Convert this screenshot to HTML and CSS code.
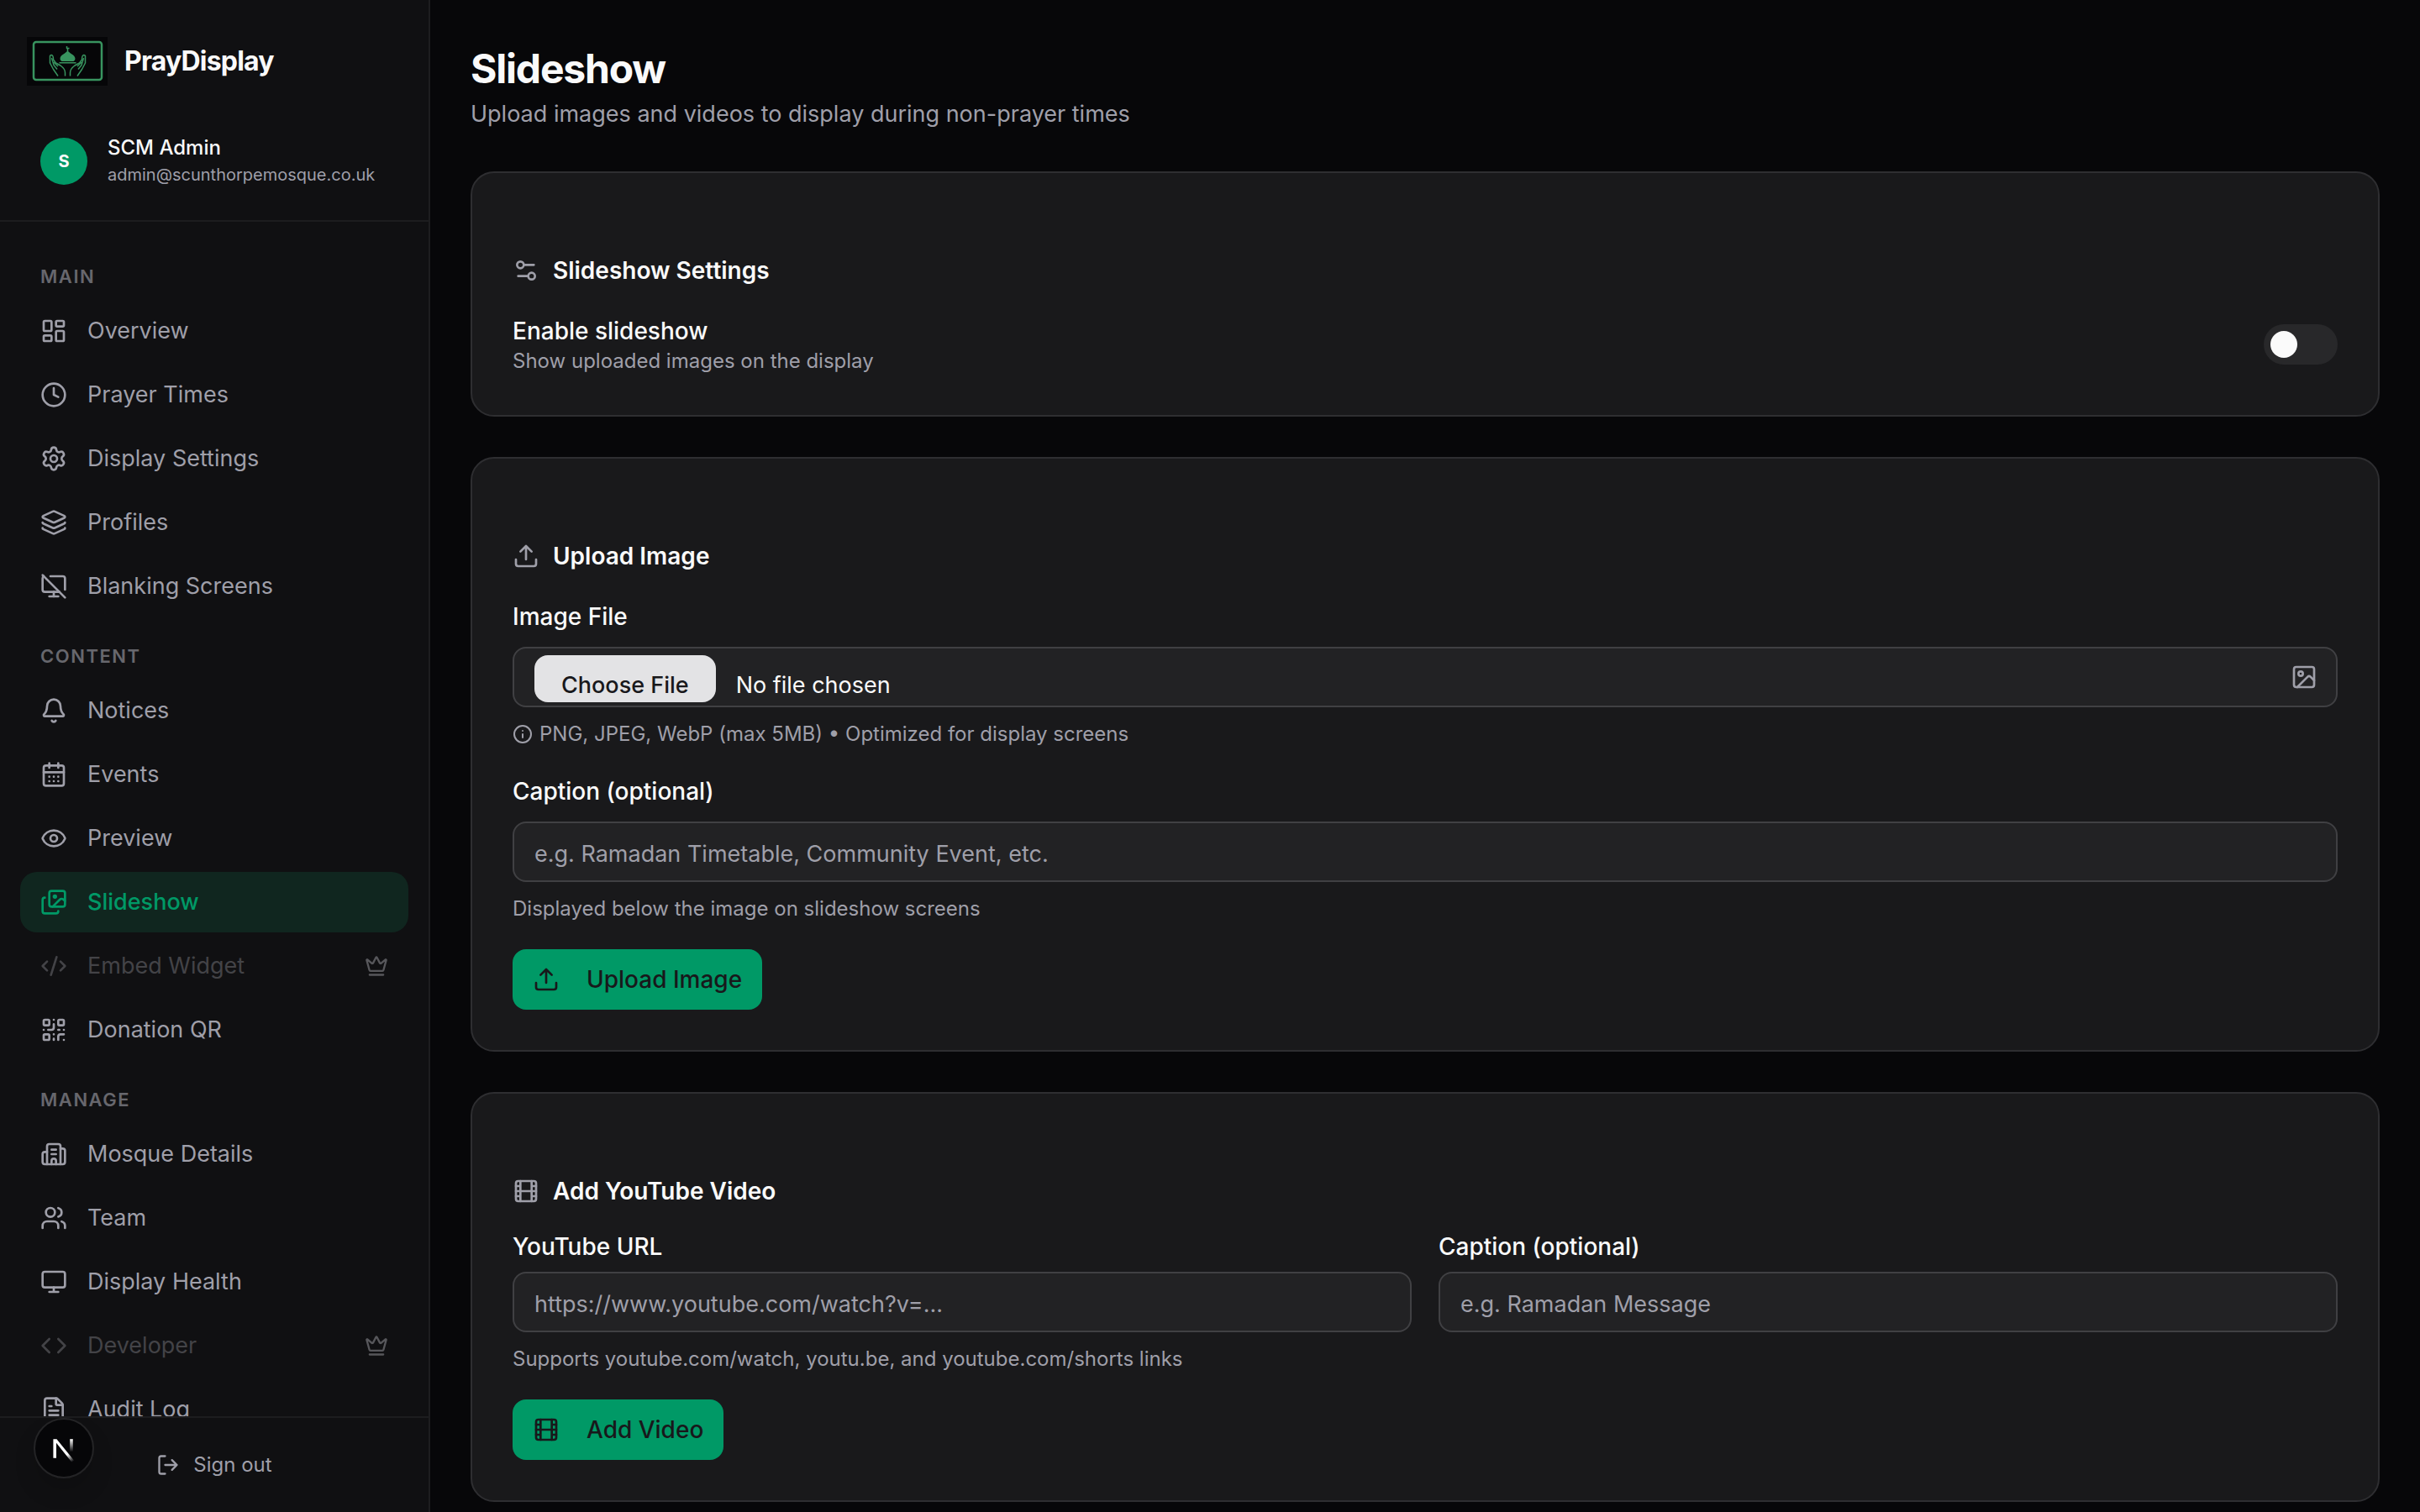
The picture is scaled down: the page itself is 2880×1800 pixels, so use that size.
FILE: index.html
```html
<!DOCTYPE html>
<html lang="en">
<head>
<meta charset="utf-8">
<title>Slideshow – PrayDisplay</title>
<meta name="viewport" content="width=device-width, initial-scale=1">
<link rel="stylesheet" href="styles.css">
</head>
<body>
<svg class="sprite" aria-hidden="true">
  <symbol id="i-dashboard" viewBox="0 0 24 24"><rect width="7" height="9" x="3" y="3" rx="1"/><rect width="7" height="5" x="14" y="3" rx="1"/><rect width="7" height="9" x="14" y="12" rx="1"/><rect width="7" height="5" x="3" y="16" rx="1"/></symbol>
  <symbol id="i-clock" viewBox="0 0 24 24"><circle cx="12" cy="12" r="10"/><path d="M12 6v6l4 2"/></symbol>
  <symbol id="i-settings" viewBox="0 0 24 24"><path d="M9.671 4.136a2.34 2.34 0 0 1 4.659 0 2.34 2.34 0 0 0 3.319 1.915 2.34 2.34 0 0 1 2.33 4.033 2.34 2.34 0 0 0 0 3.831 2.34 2.34 0 0 1-2.33 4.033 2.34 2.34 0 0 0-3.319 1.915 2.34 2.34 0 0 1-4.659 0 2.34 2.34 0 0 0-3.32-1.915 2.34 2.34 0 0 1-2.33-4.033 2.34 2.34 0 0 0 0-3.831A2.34 2.34 0 0 1 6.35 6.051a2.34 2.34 0 0 0 3.319-1.915"/><circle cx="12" cy="12" r="3"/></symbol>
  <symbol id="i-layers" viewBox="0 0 24 24"><path d="M12.83 2.18a2 2 0 0 0-1.66 0L2.6 6.08a1 1 0 0 0 0 1.83l8.58 3.91a2 2 0 0 0 1.66 0l8.58-3.9a1 1 0 0 0 0-1.83z"/><path d="M2 12a1 1 0 0 0 .58.91l8.6 3.91a2 2 0 0 0 1.65 0l8.58-3.9A1 1 0 0 0 22 12"/><path d="M2 17a1 1 0 0 0 .58.91l8.6 3.91a2 2 0 0 0 1.65 0l8.58-3.9A1 1 0 0 0 22 17"/></symbol>
  <symbol id="i-monitor-off" viewBox="0 0 24 24"><path d="M17 17H4a2 2 0 0 1-2-2V5c0-1.5 1-2 1-2"/><path d="M22 15V5a2 2 0 0 0-2-2H9"/><path d="M8 21h8"/><path d="M12 17v4"/><path d="m2 2 20 20"/></symbol>
  <symbol id="i-bell" viewBox="0 0 24 24"><path d="M10.268 21a2 2 0 0 0 3.464 0"/><path d="M3.262 15.326A1 1 0 0 0 4 17h16a1 1 0 0 0 .74-1.673C19.41 13.956 18 12.499 18 8A6 6 0 0 0 6 8c0 4.499-1.411 5.956-2.738 7.326"/></symbol>
  <symbol id="i-calendar" viewBox="0 0 24 24"><path d="M8 2v4M16 2v4"/><rect width="18" height="18" x="3" y="4" rx="2"/><path d="M3 10h18M8 14h.01M12 14h.01M16 14h.01M8 18h.01M12 18h.01M16 18h.01"/></symbol>
  <symbol id="i-eye" viewBox="0 0 24 24"><path d="M2.062 12.348a1 1 0 0 1 0-.696 10.75 10.75 0 0 1 19.876 0 1 1 0 0 1 0 .696 10.75 10.75 0 0 1-19.876 0"/><circle cx="12" cy="12" r="3"/></symbol>
  <symbol id="i-images" viewBox="0 0 24 24"><path d="m22 11-1.296-1.296a2.4 2.4 0 0 0-3.408 0L11 16"/><path d="M4 8a2 2 0 0 0-2 2v10a2 2 0 0 0 2 2h10a2 2 0 0 0 2-2"/><circle cx="13" cy="7" r="1" fill="currentColor"/><rect x="8" y="2" width="14" height="14" rx="2"/></symbol>
  <symbol id="i-code-xml" viewBox="0 0 24 24"><path d="m18 16 4-4-4-4"/><path d="m6 8-4 4 4 4"/><path d="m14.500 4-5 16"/></symbol>
  <symbol id="i-crown" viewBox="0 0 24 24"><path d="M11.562 3.266a.5.5 0 0 1 .876 0L15.390 8.870a1 1 0 0 0 1.516.294L21.183 5.500a.5.5 0 0 1 .798.519l-2.834 10.246a1 1 0 0 1-.956.734H5.810a1 1 0 0 1-.957-.734L2.020 6.020a.5.5 0 0 1 .798-.519l4.276 3.664a1 1 0 0 0 1.516-.294z"/><path d="M5 21h14"/></symbol>
  <symbol id="i-qr" viewBox="0 0 24 24"><rect width="5" height="5" x="3" y="3" rx="1"/><rect width="5" height="5" x="16" y="3" rx="1"/><rect width="5" height="5" x="3" y="16" rx="1"/><path d="M21 16h-3a2 2 0 0 0-2 2v3M21 21v.01M12 7v3a2 2 0 0 1-2 2H7M3 12h.01M12 3h.01M12 16v.01M16 12h1M21 12v.01M12 21v-1"/></symbol>
  <symbol id="i-building" viewBox="0 0 24 24"><path d="M10 12h4M10 8h4M14 21v-3a2 2 0 0 0-4 0v3"/><path d="M6 10H4a2 2 0 0 0-2 2v7a2 2 0 0 0 2 2h16a2 2 0 0 0 2-2V9a2 2 0 0 0-2-2h-2"/><path d="M6 21V5a2 2 0 0 1 2-2h8a2 2 0 0 1 2 2v16"/></symbol>
  <symbol id="i-users" viewBox="0 0 24 24"><path d="M16 21v-2a4 4 0 0 0-4-4H6a4 4 0 0 0-4 4v2"/><path d="M16 3.128a4 4 0 0 1 0 7.744"/><path d="M22 21v-2a4 4 0 0 0-3-3.870"/><circle cx="9" cy="7" r="4"/></symbol>
  <symbol id="i-monitor" viewBox="0 0 24 24"><rect width="20" height="14" x="2" y="3" rx="2"/><path d="M8 21h8M12 17v4"/></symbol>
  <symbol id="i-code" viewBox="0 0 24 24"><path d="m16 18 6-6-6-6"/><path d="m8 6-6 6 6 6"/></symbol>
  <symbol id="i-file" viewBox="0 0 24 24"><path d="M6 22a2 2 0 0 1-2-2V4a2 2 0 0 1 2-2h8a2.400 2.400 0 0 1 1.704.706l3.588 3.588A2.400 2.400 0 0 1 20 8v12a2 2 0 0 1-2 2z"/><path d="M14 2v5a1 1 0 0 0 1 1h5M10 9H8M16 13H8M16 17H8"/></symbol>
  <symbol id="i-logout" viewBox="0 0 24 24"><path d="m16 17 5-5-5-5M21 12H9M9 21H5a2 2 0 0 1-2-2V5a2 2 0 0 1 2-2h4"/></symbol>
  <symbol id="i-sliders" viewBox="0 0 24 24"><path d="M14 17H5M19 7h-9"/><circle cx="17" cy="17" r="3"/><circle cx="7" cy="7" r="3"/></symbol>
  <symbol id="i-upload" viewBox="0 0 24 24"><path d="M12 3v12M17 8l-5-5-5 5M21 15v4a2 2 0 0 1-2 2H5a2 2 0 0 1-2-2v-4"/></symbol>
  <symbol id="i-film" viewBox="0 0 24 24"><rect width="18" height="18" x="3" y="3" rx="2"/><path d="M7 3v18M3 7.500h4M3 12h18M3 16.500h4M17 3v18M17 7.500h4M17 16.500h4"/></symbol>
  <symbol id="i-info" viewBox="0 0 24 24"><circle cx="12" cy="12" r="10"/><path d="M12 16v-4M12 8h.01"/></symbol>
  <symbol id="i-image" viewBox="0 0 24 24"><rect width="18" height="18" x="3" y="3" rx="2"/><circle cx="9" cy="9" r="2"/><path d="m21 15-3.086-3.086a2 2 0 0 0-2.828 0L6 21"/></symbol>
</svg>

<div class="app">
  <aside class="sidebar">
    <header class="sidebar-head">
      <a class="brand" href="#">
        <svg class="brand-logo" viewBox="0 0 96 58" aria-hidden="true">
          <defs>
            <g id="hand">
              <path d="M37 46.500 31.500 38.500 27.500 31V22.500Q28 21.500 29.500 21.500 31.500 22 31.500 27L34.500 31 40 34Q45.500 38 45.500 42.500V46.500"/>
              <path d="M29.500 25 32 33.500 36 38.500M32 30l5 5"/>
            </g>
          </defs>
          <rect class="logo-bg" width="96" height="58"/>
          <rect class="logo-line logo-frame" x="8" y="6" width="81" height="45" rx="3"/>
          <path class="logo-fill" d="M48.500 16C50 19.500 57.500 21 57.500 26Q57.500 28 55.500 29H41.500Q39.500 28 39.500 26C39.500 21 47 19.500 48.500 16Z"/>
          <path class="logo-line" d="M48.500 17v-4M47.500 11v2.500h3M38.500 30.800h20"/>
          <use class="logo-line" href="#hand"/>
          <use class="logo-line" href="#hand" transform="matrix(-1 0 0 1 97 0)"/>
        </svg>
        <span class="brand-name">PrayDisplay</span>
      </a>
      <div class="user">
        <span class="avatar">S</span>
        <div class="user-text">
          <div class="user-name">SCM Admin</div>
          <div class="user-mail">admin@scunthorpemosque.co.uk</div>
        </div>
      </div>
    </header>
    <nav class="nav">
      <section class="nav-group">
        <h2 class="nav-label">MAIN</h2>
        <a class="nav-item" href="#"><svg class="icon"><use href="#i-dashboard"/></svg>Overview</a>
        <a class="nav-item" href="#"><svg class="icon"><use href="#i-clock"/></svg>Prayer Times</a>
        <a class="nav-item" href="#"><svg class="icon"><use href="#i-settings"/></svg>Display Settings</a>
        <a class="nav-item" href="#"><svg class="icon"><use href="#i-layers"/></svg>Profiles</a>
        <a class="nav-item" href="#"><svg class="icon"><use href="#i-monitor-off"/></svg>Blanking Screens</a>
      </section>
      <section class="nav-group">
        <h2 class="nav-label">CONTENT</h2>
        <a class="nav-item" href="#"><svg class="icon"><use href="#i-bell"/></svg>Notices</a>
        <a class="nav-item" href="#"><svg class="icon"><use href="#i-calendar"/></svg>Events</a>
        <a class="nav-item" href="#"><svg class="icon"><use href="#i-eye"/></svg>Preview</a>
        <a class="nav-item active" href="#" aria-current="page"><svg class="icon"><use href="#i-images"/></svg>Slideshow</a>
        <a class="nav-item locked" href="#"><svg class="icon"><use href="#i-code-xml"/></svg>Embed Widget<svg class="icon crown"><use href="#i-crown"/></svg></a>
        <a class="nav-item" href="#"><svg class="icon"><use href="#i-qr"/></svg>Donation QR</a>
      </section>
      <section class="nav-group">
        <h2 class="nav-label">MANAGE</h2>
        <a class="nav-item" href="#"><svg class="icon"><use href="#i-building"/></svg>Mosque Details</a>
        <a class="nav-item" href="#"><svg class="icon"><use href="#i-users"/></svg>Team</a>
        <a class="nav-item" href="#"><svg class="icon"><use href="#i-monitor"/></svg>Display Health</a>
        <a class="nav-item locked" href="#"><svg class="icon"><use href="#i-code"/></svg>Developer<svg class="icon crown"><use href="#i-crown"/></svg></a>
        <a class="nav-item" href="#"><svg class="icon"><use href="#i-file"/></svg>Audit Log</a>
      </section>
    </nav>
    <footer class="sidebar-foot">
      <button class="sign-out" type="button"><svg class="icon icon-sm"><use href="#i-logout"/></svg>Sign out</button>
    </footer>
  </aside>

  <main class="main">
    <header class="page-head">
      <h1 class="page-title">Slideshow</h1>
      <p class="page-sub">Upload images and videos to display during non-prayer times</p>
    </header>

    <section class="card">
      <h2 class="card-title"><svg class="icon"><use href="#i-sliders"/></svg>Slideshow Settings</h2>
      <div class="setting">
        <div>
          <label class="label" for="enable">Enable slideshow</label>
          <p class="hint">Show uploaded images on the display</p>
        </div>
        <input class="switch" id="enable" type="checkbox" role="switch">
      </div>
    </section>

    <section class="card">
      <h2 class="card-title"><svg class="icon"><use href="#i-upload"/></svg>Upload Image</h2>
      <form class="form">
        <div class="field">
          <label class="label" for="image-file">Image File</label>
          <div class="file-wrap">
            <input class="input file" id="image-file" type="file" accept="image/*">
            <svg class="icon file-icon"><use href="#i-image"/></svg>
          </div>
          <p class="hint"><svg class="icon icon-xs"><use href="#i-info"/></svg>PNG, JPEG, WebP (max 5MB) • Optimized for display screens</p>
        </div>
        <div class="field">
          <label class="label" for="image-caption">Caption (optional)</label>
          <input class="input" id="image-caption" type="text" placeholder="e.g. Ramadan Timetable, Community Event, etc.">
          <p class="hint">Displayed below the image on slideshow screens</p>
        </div>
        <button class="button" type="button"><svg class="icon"><use href="#i-upload"/></svg>Upload Image</button>
      </form>
    </section>

    <section class="card">
      <h2 class="card-title"><svg class="icon"><use href="#i-film"/></svg>Add YouTube Video</h2>
      <form class="form">
        <div class="columns">
          <div class="field">
            <label class="label label-tight" for="video-url">YouTube URL</label>
            <input class="input" id="video-url" type="url" placeholder="https://www.youtube.com/watch?v=...">
            <p class="hint">Supports youtube.com/watch, youtu.be, and youtube.com/shorts links</p>
          </div>
          <div class="field">
            <label class="label label-tight" for="video-caption">Caption (optional)</label>
            <input class="input" id="video-caption" type="text" placeholder="e.g. Ramadan Message">
          </div>
        </div>
        <button class="button" type="button"><svg class="icon"><use href="#i-film"/></svg>Add Video</button>
      </form>
    </section>
  </main>
</div>

<button class="dev-badge" type="button" aria-label="Open developer tools">
  <svg viewBox="0 0 40 40" aria-hidden="true">
    <defs>
      <linearGradient id="n-diag" x1="25" y1="28" x2="32" y2="38" gradientUnits="userSpaceOnUse"><stop offset="0" stop-color="#fff"/><stop offset="1" stop-color="#fff" stop-opacity="0"/></linearGradient>
      <linearGradient id="n-stem" x1="0" y1="8" x2="0" y2="25" gradientUnits="userSpaceOnUse"><stop offset="0" stop-color="#fff"/><stop offset="1" stop-color="#fff" stop-opacity="0"/></linearGradient>
    </defs>
    <path d="M6 33V8h4.500L33.500 36.500 30.500 38.500 10 13V33Z" fill="url(#n-diag)"/>
    <rect x="28" y="8" width="4" height="17" fill="url(#n-stem)"/>
  </svg>
</button>
</body>
</html>
```

FILE: styles.css
```css
:root {
  --bg: #070709;
  --panel: #101012;
  --card: #19191b;
  --line: #1d1d1f;
  --card-line: #2e2e31;
  --field: #222224;
  --field-line: #404043;
  --text: #fafafa;
  --muted: #9f9fa9;
  --accent: #009966;
}

* { box-sizing: border-box; }

body {
  margin: 0;
  background: var(--bg);
  color: var(--text);
  font: 400 27px/40px Inter, "Liberation Sans", sans-serif;
}

h1, h2, p { margin: 0; }

a { color: inherit; text-decoration: none; }

button, input { font: inherit; color: inherit; }

.sprite { position: absolute; width: 0; height: 0; }

.icon {
  flex: none;
  width: 32px;
  height: 32px;
  fill: none;
  stroke: currentColor;
  stroke-width: 2;
  stroke-linecap: round;
  stroke-linejoin: round;
}

.icon-sm { width: 28px; height: 28px; }
.icon-xs { width: 24px; height: 24px; }

.app {
  display: grid;
  grid-template-columns: 512px minmax(0, 1fr);
  height: 100vh;
}

/* Sidebar */

.sidebar {
  display: flex;
  flex-direction: column;
  min-height: 0;
  background: var(--panel);
  border-right: 2px solid var(--line);
}

.sidebar-head {
  display: flex;
  flex-direction: column;
  gap: 46px;
  padding: 44px 32px 26px;
  border-bottom: 2px solid var(--line);
}

.brand {
  display: flex;
  align-items: center;
  gap: 20px;
}

.brand-logo { width: 96px; height: 58px; }
.logo-bg { fill: #060608; }
.logo-fill { fill: #38945f; }
.logo-line { fill: none; stroke: #38945f; stroke-width: 1.5; stroke-linejoin: round; }
.logo-frame { stroke-width: 2.5; }

.brand-name {
  font-size: 32px;
  font-weight: 700;
  letter-spacing: -0.025em;
}

.user {
  display: flex;
  align-items: center;
  gap: 24px;
  padding: 12px 16px;
}

.avatar {
  display: grid;
  place-items: center;
  width: 56px;
  height: 56px;
  border-radius: 50%;
  background: var(--accent);
  font-size: 20px;
  font-weight: 700;
}

.user-name {
  font-size: 24px;
  line-height: 32px;
  font-weight: 500;
}

.user-mail {
  color: var(--muted);
  font-size: 20px;
  line-height: 32px;
}

.nav {
  display: flex;
  flex: 1;
  flex-direction: column;
  gap: 16px;
  min-height: 0;
  padding: 34px 24px 0;
  overflow: hidden;
}

.nav-group {
  display: flex;
  flex: none;
  flex-direction: column;
  gap: 4px;
}

.nav-label {
  padding: 15px 24px 9px;
  color: #67676d;
  font-size: 22px;
  line-height: 32px;
  font-weight: 600;
  letter-spacing: 0.07em;
}

.nav-item {
  display: flex;
  align-items: center;
  gap: 24px;
  height: 72px;
  padding: 0 24px;
  border-radius: 20px;
  color: var(--muted);
}

.nav-item.active {
  background: #10261f;
  color: var(--accent);
  font-weight: 500;
}

.nav-item.locked { color: #434347; }

.crown {
  width: 28px;
  height: 28px;
  margin-left: auto;
  color: #57575b;
}

.sidebar-foot {
  padding: 24px;
  border-top: 2px solid var(--line);
}

.sign-out {
  display: flex;
  align-items: center;
  justify-content: center;
  gap: 16px;
  width: 100%;
  height: 64px;
  border: 0;
  background: none;
  color: var(--muted);
  font-size: 24px;
}

.dev-badge {
  position: fixed;
  bottom: 40px;
  left: 40px;
  display: grid;
  place-items: center;
  width: 72px;
  height: 72px;
  padding: 0;
  border: 2px solid #242426;
  border-radius: 50%;
  background: #060608;
  box-shadow: 0 16px 32px -8px rgb(0 0 0 / 24%);
}

.dev-badge svg { width: 36px; height: 36px; }

/* Page */

.main {
  display: flex;
  flex-direction: column;
  gap: 48px;
  min-height: 0;
  padding: 50px 48px 0;
  overflow: hidden;
}

.page-title {
  font-size: 48px;
  line-height: 64px;
  font-weight: 700;
  letter-spacing: -0.025em;
}

.page-sub {
  padding-top: 2px;
  color: var(--muted);
}

.card {
  display: flex;
  flex: none;
  flex-direction: column;
  gap: 32px;
  padding: 96px 48px 48px;
  border: 2px solid var(--card-line);
  border-radius: 28px;
  background: var(--card);
}

.card-title {
  display: flex;
  align-items: center;
  gap: 16px;
  font-size: 28px;
  line-height: 40px;
  font-weight: 600;
}

.card-title .icon { color: var(--muted); }

.setting {
  display: flex;
  align-items: center;
  justify-content: space-between;
}

.switch {
  display: flex;
  align-items: center;
  width: 88px;
  height: 48px;
  margin: 0;
  padding: 0 8px;
  border-radius: 24px;
  background: #28282a;
  appearance: none;
}

.switch::before {
  width: 32px;
  height: 32px;
  border-radius: 50%;
  background: var(--text);
  content: "";
}

.switch:checked { justify-content: flex-end; background: var(--accent); }

.form {
  display: flex;
  flex-direction: column;
  align-items: flex-start;
  gap: 32px;
}

.field {
  display: flex;
  flex-direction: column;
  gap: 16px;
  width: 100%;
}

.columns {
  display: grid;
  grid-template-columns: 1fr 1fr;
  gap: 32px;
  width: 100%;
}

.label {
  display: block;
  font-size: 28px;
  font-weight: 500;
}

.label-tight { line-height: 28px; }

.hint {
  display: flex;
  align-items: center;
  gap: 8px;
  color: var(--muted);
  font-size: 24px;
  line-height: 32px;
}

.input {
  display: block;
  width: 100%;
  height: 72px;
  padding: 4px 24px 0;
  border: 2px solid var(--field-line);
  border-radius: 16px;
  background: var(--field);
}

.input::placeholder { color: var(--muted); opacity: 1; }

.file-wrap { position: relative; }

.file {
  padding: 8px 24px;
  overflow: hidden;
}

.file::file-selector-button {
  height: 56px;
  margin: 0 24px 0 0;
  padding: 16px 32px 0;
  border: 0;
  border-radius: 16px;
  background: #e3e3e5;
  color: #18181b;
  font: inherit;
  font-weight: 500;
}

.file-icon {
  position: absolute;
  top: 20px;
  right: 24px;
  color: var(--muted);
}

.button {
  display: flex;
  align-items: center;
  gap: 32px;
  height: 72px;
  padding: 0 24px;
  border: 0;
  border-radius: 16px;
  background: var(--accent);
  color: #18181b;
  font-size: 28px;
  font-weight: 500;
}
```
